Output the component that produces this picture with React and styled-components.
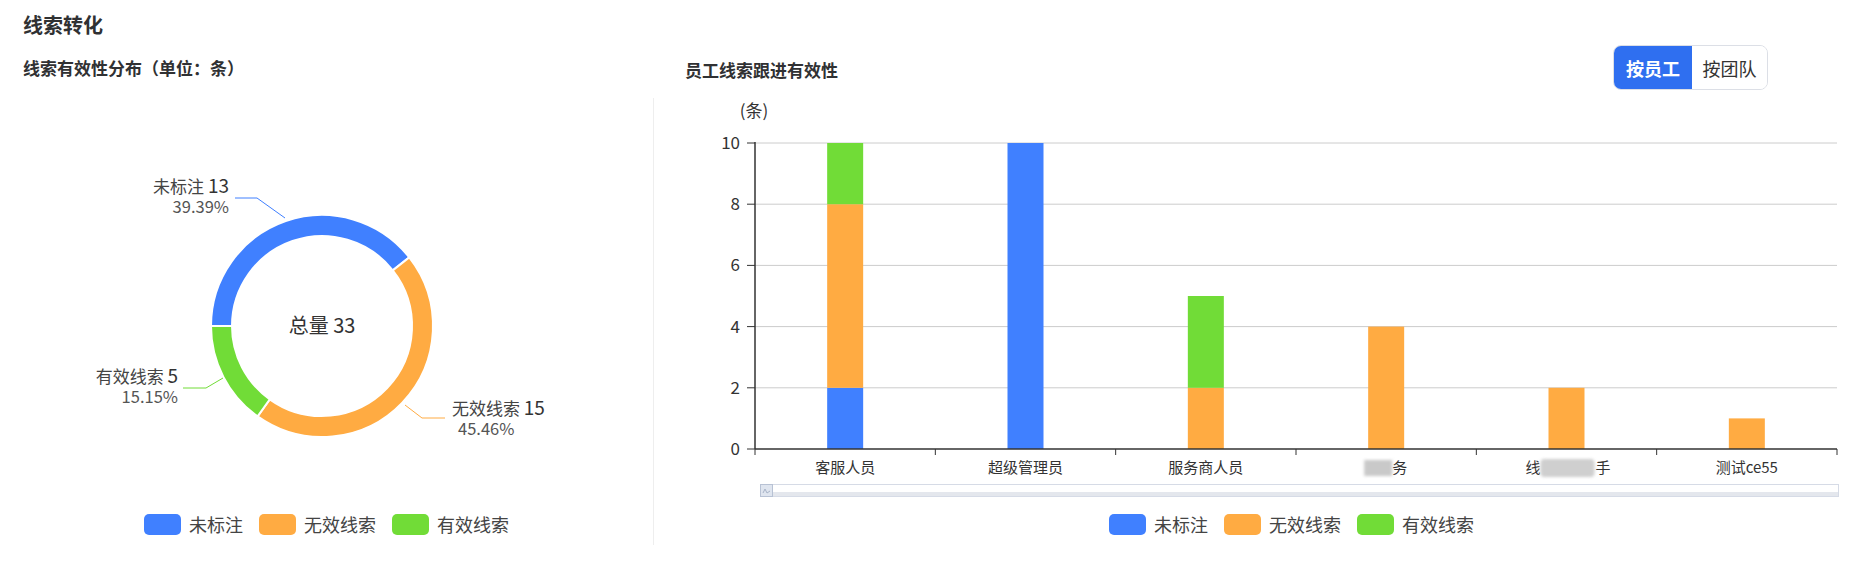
import React, { useState } from 'react';
import styled, { createGlobalStyle } from 'styled-components';

const COLORS = { none: '#4080FF', bad: '#FFAB42', good: '#71DC37' };

const legendItems = [
  { key: 'none', label: '未标注' },
  { key: 'bad', label: '无效线索' },
  { key: 'good', label: '有效线索' },
];

// stacked values per employee: [未标注, 无效线索, 有效线索]
const staff = [
  { name: '客服人员', v: [2, 6, 2] },
  { name: '超级管理员', v: [10, 0, 0] },
  { name: '服务商人员', v: [0, 2, 3] },
  { name: 'blur4', v: [0, 4, 0] },
  { name: 'blur5', v: [0, 2, 0] },
  { name: '测试ce55', v: [0, 1, 0] },
];

const Global = createGlobalStyle`
  body {
    margin: 0;
    background: #fff;
    font-family: "Noto Sans CJK SC", "Microsoft YaHei", "Noto Sans", sans-serif;
    color: #333;
  }
`;

const Page = styled.div`
  width: 1867px;
  height: 570px;
  overflow: hidden;
`;

const Title = styled.h2`
  margin: 0;
  padding: 11px 23px 6px;
  font-size: 20px;
  line-height: 28px;
  font-weight: 700;
  color: #303133;
`;

const Columns = styled.div`
  display: grid;
  grid-template-columns: 654px 1fr;
`;

const Column = styled.div`
  display: flex;
  flex-direction: column;
`;

const PanelHeader = styled.div`
  height: 45px;
  display: flex;
  align-items: center;
  justify-content: space-between;
  padding: ${(p) => p.$pad};
  margin-bottom: 8px;
`;

const SubTitle = styled.h3`
  margin: 0;
  font-size: 17px;
  font-weight: 700;
  color: #303133;
  margin-top: ${(p) => p.$offset || 0}px;
`;

const Toggle = styled.div`
  display: flex;
  height: 45px;
  border: 1px solid #dcdfe6;
  border-radius: 8px;
  overflow: hidden;
  box-sizing: border-box;
`;

const ToggleButton = styled.button`
  border: none;
  margin: 0;
  padding: 0;
  width: ${(p) => p.$w}px;
  font-family: inherit;
  font-size: 18px;
  font-weight: ${(p) => (p.$active ? 700 : 400)};
  color: ${(p) => (p.$active ? '#fff' : '#333')};
  background: ${(p) => (p.$active ? '#2F6FF0' : '#fff')};
  cursor: pointer;
`;

const ChartBody = styled.div`
  display: flex;
  flex-direction: column;
  padding-bottom: 10px;
  border-right: ${(p) => (p.$divider ? '1px solid #eeeeee' : 'none')};
`;

const Legend = styled.div`
  display: flex;
  justify-content: center;
  align-items: center;
  gap: 16px;
  height: 21px;
  margin-top: 16px;
  padding-left: ${(p) => p.$shift || 0}px;
`;

const LegendItem = styled.div`
  display: flex;
  align-items: center;
  gap: 8px;
`;

const Swatch = styled.span`
  width: 37px;
  height: 21px;
  border-radius: 5px;
  background: ${(p) => p.$color};
`;

const LegendLabel = styled.span`
  font-size: 18px;
  color: #444;
  line-height: 21px;
`;

function ChartLegend({ shift }) {
  return (
    <Legend $shift={shift}>
      {legendItems.map((it) => (
        <LegendItem key={it.key}>
          <Swatch $color={COLORS[it.key]} />
          <LegendLabel>{it.label}</LegendLabel>
        </LegendItem>
      ))}
    </Legend>
  );
}

const rad = (d) => (d * Math.PI) / 180;
const arcPath = (cx, cy, r0, r1, a0, a1) => {
  const p = (r, a) => [cx + r * Math.sin(rad(a)), cy - r * Math.cos(rad(a))];
  const large = a1 - a0 > 180 ? 1 : 0;
  const [x1, y1] = p(r1, a0);
  const [x2, y2] = p(r1, a1);
  const [x3, y3] = p(r0, a1);
  const [x4, y4] = p(r0, a0);
  return `M${x1} ${y1} A${r1} ${r1} 0 ${large} 1 ${x2} ${y2} L${x3} ${y3} A${r0} ${r0} 0 ${large} 0 ${x4} ${y4} Z`;
};

// two-line pie label: "name value" over "percent"
function PieLabel({ x, y, anchor, name, value, pct, indent = 0 }) {
  return (
    <g>
      <text x={x} y={y} textAnchor={anchor} fill="#444" fontSize="17">
        {name} <tspan fontSize="19" fill="#333">{value}</tspan>
      </text>
      <text x={x + indent} y={y + 20} textAnchor={anchor} fill="#555" fontSize="16.5">
        {pct}
      </text>
    </g>
  );
}

function Donut() {
  const cx = 322;
  const cy = 326;
  const data = [
    { key: 'none', v: 13 },
    { key: 'bad', v: 15 },
    { key: 'good', v: 5 },
  ];
  const total = 33;
  let a = 270;
  const segs = data.map((d) => {
    const a0 = a;
    a += (d.v / total) * 360;
    return { ...d, a0, a1: a };
  });
  return (
    <svg width="653" height="400" viewBox="0 98 653 400">
      {segs.map((s) => (
        <path
          key={s.key}
          d={arcPath(cx, cy, 90, 111, s.a0, s.a1)}
          fill={COLORS[s.key]}
          stroke="#fff"
          strokeWidth="2"
        />
      ))}
      <text x={cx} y={cy + 7} textAnchor="middle" fontSize="20" fill="#333">
        总量 33
      </text>

      <polyline points="285,218 257,198 235,198" fill="none" stroke={COLORS.none} strokeWidth="1" />
      <PieLabel x={229} y={193} anchor="end" name="未标注" value="13" pct="39.39%" />

      <polyline points="223,378 206,388 183,388" fill="none" stroke={COLORS.good} strokeWidth="1" />
      <PieLabel x={178} y={383} anchor="end" name="有效线索" value="5" pct="15.15%" />

      <polyline points="405,405 422,418 445,418" fill="none" stroke={COLORS.bad} strokeWidth="1" />
      <PieLabel x={452} y={415} anchor="start" name="无效线索" value="15" pct="45.46%" indent={6} />
    </svg>
  );
}

function BarChart() {
  const left = 755;
  const right = 1837;
  const base = 449;
  const unit = 30.6;
  const step = (right - left) / staff.length;
  const bw = 36;
  const y = (v) => base - v * unit;
  const keys = ['none', 'bad', 'good'];

  const label = (s, cx) => {
    if (s.name === 'blur4') {
      return (
        <g key={s.name}>
          <rect x={cx - 22} y="460" width="28" height="16" fill="#c9c9c9" filter="url(#mosaic)" />
          <text x={cx + 6} y="473" fontSize="15" fill="#333">务</text>
        </g>
      );
    }
    if (s.name === 'blur5') {
      return (
        <g key={s.name}>
          <text x={cx - 41} y="473" fontSize="15" fill="#333">线</text>
          <rect x={cx - 26} y="459" width="54" height="18" rx="4" fill="#cfcfcf" filter="url(#mosaic)" />
          <text x={cx + 29} y="473" fontSize="15" fill="#333">手</text>
        </g>
      );
    }
    return (
      <text key={s.name} x={cx} y="473" textAnchor="middle" fontSize="15" fill="#333">
        {s.name}
      </text>
    );
  };

  return (
    <svg width="1213" height="400" viewBox="654 98 1213 400">
      <defs>
        <filter id="mosaic" x="-20%" y="-20%" width="140%" height="140%">
          <feGaussianBlur stdDeviation="1.5" />
        </filter>
      </defs>
      <text x="754" y="117" textAnchor="middle" fontSize="17" fill="#333">(条)</text>

      {[2, 4, 6, 8, 10].map((v) => (
        <line key={v} x1={left} x2={right} y1={y(v)} y2={y(v)} stroke="#cccccc" strokeWidth="1" />
      ))}
      {[0, 2, 4, 6, 8, 10].map((v) => (
        <g key={v}>
          <line x1={left - 8} x2={left} y1={y(v)} y2={y(v)} stroke="#333" strokeWidth="1" />
          <text x="740" y={y(v) + 6} textAnchor="end" fontSize="17" fill="#333">
            {v}
          </text>
        </g>
      ))}

      {staff.map((s, i) => {
        const cx = left + step * (i + 0.5);
        let acc = 0;
        return (
          <g key={s.name}>
            {s.v.map((v, k) => {
              if (!v) return null;
              const top = y(acc + v);
              const h = v * unit;
              acc += v;
              return <rect key={k} x={cx - bw / 2} y={top} width={bw} height={h} fill={COLORS[keys[k]]} />;
            })}
            {label(s, cx)}
          </g>
        );
      })}

      <line x1={left} x2={left} y1={y(10) - 1} y2={base} stroke="#333" strokeWidth="1.5" />
      <line x1={left} x2={right} y1={base} y2={base} stroke="#333" strokeWidth="1.5" />
      {staff.map((s, i) => (
        <line key={i} x1={left + step * i} x2={left + step * i} y1={base} y2={base + 6} stroke="#333" strokeWidth="1" />
      ))}
      <line x1={right} x2={right} y1={base} y2={base + 6} stroke="#333" strokeWidth="1" />

      {/* data zoom slider */}
      <rect x="760.5" y="484.5" width="1078" height="12" fill="#fff" stroke="#d6dbe6" />
      <rect x="761" y="492" width="1077" height="4" fill="#e4e7ed" />
      <rect x="760.5" y="484.5" width="12" height="12" fill="#dfe5ef" stroke="#b8c2d4" />
      <path d="M763 493 L765 489 L767 493 L770 491" fill="none" stroke="#a7b3c7" strokeWidth="1" />
    </svg>
  );
}

export default function App() {
  const [mode, setMode] = useState('staff');
  return (
    <Page>
      <Global />
      <Title>线索转化</Title>
      <Columns>
        <Column>
          <PanelHeader $pad="0 23px">
            <SubTitle $offset={-1}>线索有效性分布（单位：条）</SubTitle>
          </PanelHeader>
          <ChartBody $divider>
            <Donut />
            <ChartLegend shift={-6} />
          </ChartBody>
        </Column>
        <Column>
          <PanelHeader $pad="0 99px 0 31px">
            <SubTitle $offset={3}>员工线索跟进有效性</SubTitle>
            <Toggle>
              <ToggleButton $w={78} $active={mode === 'staff'} onClick={() => setMode('staff')}>
                按员工
              </ToggleButton>
              <ToggleButton $w={75} $active={mode === 'team'} onClick={() => setMode('team')}>
                按团队
              </ToggleButton>
            </Toggle>
          </PanelHeader>
          <ChartBody>
            <BarChart />
            <ChartLegend shift={62} />
          </ChartBody>
        </Column>
      </Columns>
    </Page>
  );
}
